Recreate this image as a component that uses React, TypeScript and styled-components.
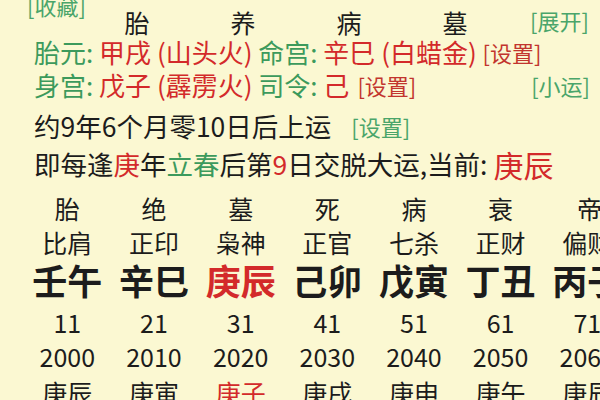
import React from "react";
import styled, { createGlobalStyle } from "styled-components";

const Global = createGlobalStyle`
  html, body { margin: 0; padding: 0; background: #fbf8d2; overflow: hidden; }
  body { font-family: "Noto Sans CJK SC", "Noto Sans", sans-serif; color: #1c1c1c; }
`;

const Page = styled.div`
  width: 600px;
  height: 400px;
  overflow: hidden;
  background: #fbf8d2;
  display: flex;
  flex-direction: column;
`;

const HeaderRow = styled.div`
  display: flex;
  align-items: flex-start;
  height: 40px;
  padding-left: 27px;
`;

const Link = styled.span<{ $tone?: "green" | "red"; $gap?: number }>`
  font-size: 22px;
  line-height: 30px;
  color: ${(p) => (p.$tone === "red" ? "#c2352e" : "#4aa56a")};
  margin-left: ${(p) => p.$gap ?? 0}px;
  white-space: nowrap;
`;

const Collect = styled(Link)`
  width: 57px;
  margin-top: -10px;
`;

const Expand = styled(Link)`
  margin-left: 22px;
  margin-top: 5px;
`;

const HeadLabels = styled.div`
  display: flex;
  margin-top: 7px;
`;

const HeadLabel = styled.span`
  width: 106px;
  text-align: center;
  font-size: 25px;
  line-height: 30px;
`;

const Line = styled.div<{ $h: number; $mt?: number; $size?: number }>`
  display: flex;
  align-items: center;
  height: ${(p) => p.$h}px;
  line-height: ${(p) => p.$h}px;
  margin-top: ${(p) => p.$mt ?? 0}px;
  padding-left: 34px;
  padding-right: 10px;
  font-size: ${(p) => p.$size ?? 26}px;
  white-space: nowrap;
`;

const Text = styled.span<{ $c?: "green" | "red" | "dark" }>`
  color: ${(p) =>
    p.$c === "green" ? "#3c9a5c" : p.$c === "red" ? "#d32a2a" : "#1c1c1c"};
  white-space: pre;
`;

const Big = styled.span`
  color: #d32a2a;
  font-size: 30px;
`;

const Spacer = styled.span`
  flex: 1;
`;

const Grid = styled.div`
  display: grid;
  grid-template-columns: repeat(7, 86.67px);
  padding-left: 24px;
  margin-top: 8px;
`;

const Cell = styled.div<{
  $h: number;
  $red?: boolean;
  $bold?: boolean;
  $size?: number;
  $shift?: number;
}>`
  height: ${(p) => p.$h}px;
  line-height: ${(p) => p.$h}px;
  text-align: ${(p) => (p.$shift ? "left" : "center")};
  padding-left: ${(p) => p.$shift ?? 0}px;
  white-space: nowrap;
  font-size: ${(p) => p.$size ?? 25}px;
  font-weight: ${(p) => (p.$bold ? 700 : 400)};
  color: ${(p) => (p.$red ? "#d32a2a" : "#1c1c1c")};
`;

const AgeCell = styled(Cell)`
  margin-top: 4px;
`;

const states = ["胎", "绝", "墓", "死", "病", "衰", "帝旺"];
const gods = ["比肩", "正印", "枭神", "正官", "七杀", "正财", "偏财"];
const pillars = ["壬午", "辛巳", "庚辰", "己卯", "戊寅", "丁丑", "丙子"];
const ages = ["11", "21", "31", "41", "51", "61", "71"];
const years = ["2000", "2010", "2020", "2030", "2040", "2050", "2060"];
const flows = ["庚辰", "庚寅", "庚子", "庚戌", "庚申", "庚午", "庚辰"];

export default function App() {
  return (
    <Page>
      <Global />
      <HeaderRow>
        <Collect>[收藏]</Collect>
        <HeadLabels>
          {["胎", "养", "病", "墓"].map((t) => (
            <HeadLabel key={t}>{t}</HeadLabel>
          ))}
        </HeadLabels>
        <Expand>[展开]</Expand>
      </HeaderRow>

      <Line $h={33} $mt={-2}>
        <Text $c="green">胎元: </Text>
        <Text $c="red">甲戌 (山头火) </Text>
        <Text $c="green">命宫: </Text>
        <Text $c="red">辛巳 (白蜡金) </Text>
        <Link $tone="red">[设置]</Link>
      </Line>

      <Line $h={33}>
        <Text $c="green">身宫: </Text>
        <Text $c="red">戊子 (霹雳火) </Text>
        <Text $c="green">司令: </Text>
        <Text $c="red">己</Text>
        <Link $tone="red" $gap={8}>[设置]</Link>
        <Spacer />
        <Link>[小运]</Link>
      </Line>

      <Line $h={34} $mt={8} $size={26.5}>
        <Text>约9年6个月零10日后上运</Text>
        <Link $gap={20}>[设置]</Link>
      </Line>

      <Line $h={38} $mt={2} $size={26.5}>
        <Text>即每逢</Text>
        <Text $c="red">庚</Text>
        <Text>年</Text>
        <Text $c="green">立春</Text>
        <Text>后第</Text>
        <Text $c="red">9</Text>
        <Text>日交脱大运,当前: </Text>
        <Big>庚辰</Big>
      </Line>

      <Grid>
        {states.map((t, i) => (
          <Cell key={"s" + i} $h={34} $shift={i === 6 ? 33 : undefined}>
            {t}
          </Cell>
        ))}
        {gods.map((t, i) => (
          <Cell key={"g" + i} $h={34}>
            {t}
          </Cell>
        ))}
        {pillars.map((t, i) => (
          <Cell key={"p" + i} $h={42} $bold $size={35} $red={i === 2}>
            {t}
          </Cell>
        ))}
        {ages.map((t, i) => (
          <AgeCell key={"a" + i} $h={34}>
            {t}
          </AgeCell>
        ))}
        {years.map((t, i) => (
          <Cell key={"y" + i} $h={34}>
            {t}
          </Cell>
        ))}
        {flows.map((t, i) => (
          <Cell key={"f" + i} $h={38} $red={i === 2}>
            {t}
          </Cell>
        ))}
      </Grid>
    </Page>
  );
}
